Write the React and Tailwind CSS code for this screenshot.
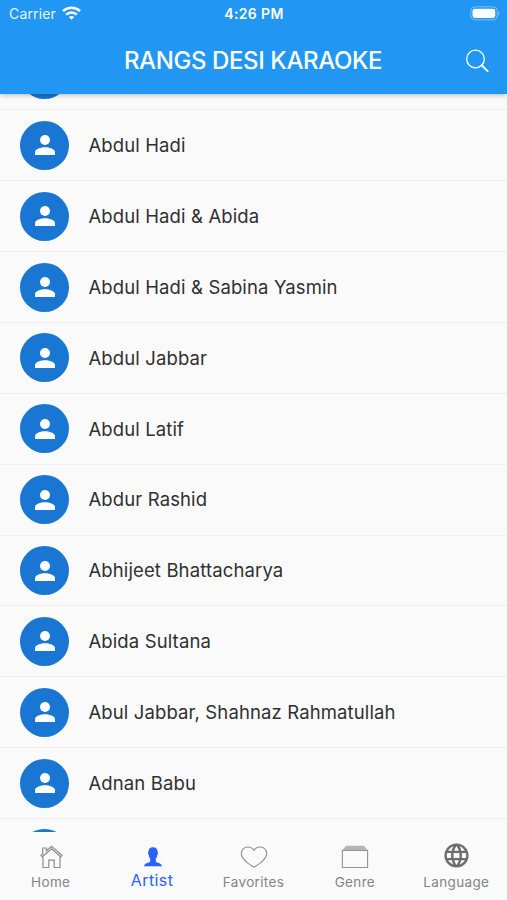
const artists = [
  "",
  "Abdul Hadi",
  "Abdul Hadi & Abida",
  "Abdul Hadi & Sabina Yasmin",
  "Abdul Jabbar",
  "Abdul Latif",
  "Abdur Rashid",
  "Abhijeet Bhattacharya",
  "Abida Sultana",
  "Abul Jabbar, Shahnaz Rahmatullah",
  "Adnan Babu",
  "",
];

function StatusBar() {
  return (
    <div className="grid h-[27px] grid-cols-3 items-center pl-[9px] pr-[6px] text-[14px] leading-none">
      <div className="flex items-center gap-[6px]">
        <span className="tracking-[0.15px] opacity-90">Carrier</span>
        <svg className="-mt-[2px]" width="19" height="14" viewBox="0 0 19 14" fill="none" stroke="white" strokeWidth="2.5">
          <path d="M1 5.2C5.8 .7 13.2 .7 18 5.2" />
          <path d="M4.1 8.6C7.1 5.7 11.9 5.7 14.9 8.6" />
          <path d="M6.8 10.9C8.3 9.6 10.7 9.6 12.2 10.9L9.5 13.7Z" fill="white" stroke="none" />
        </svg>
      </div>
      <span className="-ml-[2px] text-center font-semibold tracking-[0.35px]">4:26 PM</span>
      <svg className="justify-self-end" width="31" height="15" viewBox="0 0 31 15">
        <rect x=".8" y=".8" width="26.4" height="13" rx="4" fill="none" stroke="white" strokeOpacity=".4" />
        <rect x="2.5" y="2.7" width="22.8" height="9.2" rx="2.3" fill="white" />
        <path d="M28.4 5.2Q30.5 7.3 28.4 9.4Z" fill="white" fillOpacity=".5" />
      </svg>
    </div>
  );
}

function Header() {
  return (
    <header className="relative z-10 h-[94px] shrink-0 bg-[#2196f3] text-white shadow-[0_1px_5px_rgba(0,0,0,0.28)]">
      <StatusBar />
      <div className="grid h-[67px] grid-cols-[60px_1fr_60px] items-center">
        <span />
        <h1 className="-ml-px text-center text-[24px] font-medium leading-none tracking-[-0.4px] whitespace-nowrap">
          RANGS DESI KARAOKE
        </h1>
        <svg className="ml-[18px]" width="26" height="26" viewBox="0 0 26 26" fill="none" stroke="white" strokeLinecap="round">
          <circle cx="10.5" cy="11" r="8.8" strokeWidth="1.3" />
          <path d="m16.8 17.3 5.8 5.8" strokeWidth="2" />
        </svg>
      </div>
    </header>
  );
}

function Avatar() {
  return (
    <div className="flex size-[49px] shrink-0 items-center justify-center rounded-full bg-[#1976d2]">
      <svg width="20" height="20" viewBox="0 0 20 20" fill="white">
        <circle cx="10" cy="5" r="5" />
        <path d="M0 20v-2.8C0 13.9 5.8 12.3 10 12.3s10 1.6 10 4.9V20Z" />
      </svg>
    </div>
  );
}

function HomeIcon() {
  return (
    <svg className="ml-px" width="23" height="24" viewBox="0 0 23 24" fill="none" stroke="#8e8e8e" strokeWidth="1.2">
      <path d="M3 12v10.5h5.8v-7.3h5.4v7.3H20V12" />
      <path d="M11.5 1.2 22 10.4l-1.2 1.4-9.3-8.1-9.3 8.1L1 10.4l1.7-1.5V3h3.6v2.7Z" />
    </svg>
  );
}

function ArtistIcon() {
  return (
    <svg className="ml-[2px]" width="18" height="20" viewBox="0 0 18 20" fill="#2962ff">
      <path d="M9 .3C5.9 .3 4.3 1.900 4.400 5c-.6.5-.3 2.500.3 3 .3 1.700.7 2.900 1.500 3.700v2.900C5.500 16.200 .6 15.700 0 19.300h18c-.6-3.600-5.500-3.100-6.200-4.700v-2.900c.8-.8 1.200-2 1.500-3.700.6-.5.9-2.500.3-3C13.700 1.900 12.100 .3 9 .3Z" />
    </svg>
  );
}

function HeartIcon() {
  return (
    <svg className="ml-px" width="28" height="22" viewBox="0 0 28 22" fill="none" stroke="#929292" strokeWidth="1.1">
      <path d="M14 4.5C12.5 2 10.3 1 7.8 1 4.1 1 1.3 3.8 1.3 7.4c0 6.700 8.300 11 12.700 13.800 4.400-2.800 12.700-7.100 12.700-13.800C26.700 3.800 23.900 1 20.200 1c-2.500 0-4.700 1-6.200 3.500Z" />
    </svg>
  );
}

function GenreIcon() {
  return (
    <svg width="28" height="24" viewBox="0 0 28 24">
      <path d="M5 .8h18L26.6 5H1.4Z" fill="#b5b5b5" />
      <path d="M1.4 5.5h25.2v17H1.4Z" fill="none" stroke="#929292" strokeWidth="1.1" />
    </svg>
  );
}

function GlobeIcon() {
  return (
    <svg className="-mt-[3px]" width="29" height="29" viewBox="0 0 24 24" fill="#6d6d6d">
      <path d="M11.99 2C6.47 2 2 6.480 2 12s4.470 10 9.990 10C17.520 22 22 17.520 22 12S17.520 2 11.990 2zm6.930 6h-2.950c-.32-1.250-.78-2.450-1.380-3.560 1.840.63 3.370 1.910 4.330 3.560zM12 4.040c.83 1.200 1.480 2.530 1.910 3.960h-3.820c.43-1.430 1.080-2.760 1.910-3.960zM4.260 14C4.100 13.360 4 12.690 4 12s.1-1.360.26-2h3.380c-.08.66-.14 1.320-.14 2s.06 1.340.14 2H4.260zm.82 2h2.950c.32 1.250.78 2.450 1.380 3.560-1.840-.63-3.370-1.900-4.330-3.560zm2.950-8H5.080c.96-1.660 2.490-2.930 4.330-3.560C8.810 5.550 8.350 6.750 8.030 8zM12 19.960c-.83-1.200-1.480-2.530-1.910-3.960h3.820c-.43 1.430-1.080 2.760-1.910 3.960zM14.340 14H9.660c-.09-.66-.16-1.320-.16-2s.07-1.350.16-2h4.680c.09.65.16 1.320.16 2s-.07 1.340-.16 2zm.25 5.560c.6-1.110 1.060-2.310 1.380-3.560h2.950c-.96 1.650-2.490 2.930-4.330 3.560zM16.360 14c.08-.66.14-1.320.14-2s-.06-1.340-.14-2h3.380c.16.64.26 1.310.26 2s-.1 1.360-.26 2h-3.380z" />
    </svg>
  );
}

const tabs = [
  { label: "Home", Icon: HomeIcon },
  { label: "Artist", Icon: ArtistIcon, active: true },
  { label: "Favorites", Icon: HeartIcon },
  { label: "Genre", Icon: GenreIcon },
  { label: "Language", Icon: GlobeIcon },
];

export default function App() {
  return (
    <div className="flex h-[900px] w-[507px] flex-col overflow-hidden bg-[#fafafa] font-['Inter','Liberation_Sans',sans-serif]">
      <Header />
      <main className="min-h-0 flex-1 overflow-hidden">
        <ul className="-mt-[54.4px]">
          {artists.map((name, i) => (
            <li key={i} className="flex h-[70.87px] items-center gap-[19px] border-b border-[#eeeeee] pl-[20.4px]">
              <Avatar />
              <span className="text-[18.5px] leading-none tracking-[0.13px] whitespace-nowrap text-[#303030]">{name}</span>
            </li>
          ))}
        </ul>
      </main>
      <nav className="grid h-[68px] shrink-0 grid-cols-5 bg-[#fafafa]">
        {tabs.map(({ label, Icon, active }) => (
          <div key={label} className="flex flex-col items-center">
            <div className={active ? "flex h-[50px] items-center" : "flex h-[49px] items-center"}>
              <Icon />
            </div>
            <span
              className={
                active
                  ? "-mt-[10px] text-[16px] leading-[16px] tracking-[0.4px] text-[#2962ff]"
                  : "-mt-[6px] text-[13.5px] leading-[14px] tracking-[0.35px] text-[#858585]"
              }
            >
              {label}
            </span>
          </div>
        ))}
      </nav>
    </div>
  );
}
